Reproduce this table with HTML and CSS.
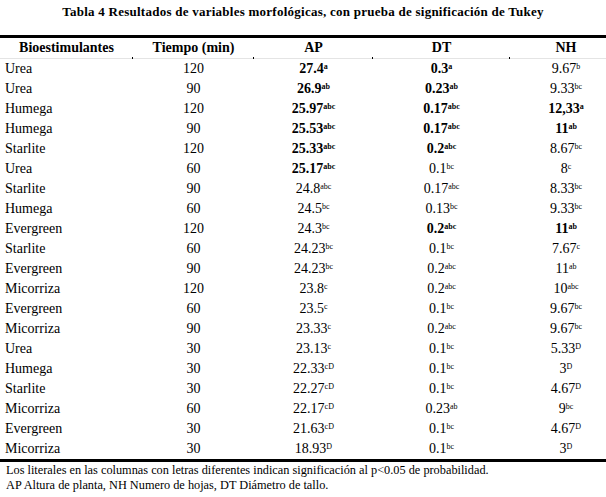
FILE: index.html
```html
<!DOCTYPE html>
<html lang="es">
<head>
<meta charset="utf-8">
<title>Tabla 4</title>
<link rel="stylesheet" href="styles.css">
</head>
<body>
<div class="page">
  <h1 class="title">Tabla 4 Resultados de variables morfológicas, con prueba de significación de Tukey</h1>
  <table class="data">
    <colgroup>
      <col class="c-name"><col class="c-time"><col class="c-ap"><col class="c-dt"><col class="c-nh">
    </colgroup>
    <thead>
      <tr><th>Bioestimulantes</th><th>Tiempo (min)</th><th>AP</th><th>DT</th><th class="last">NH</th></tr>
    </thead>
    <tbody>
      <tr><td>Urea</td><td>120</td><td><b>27.4<sup>a</sup></b></td><td><b>0.3<sup>a</sup></b></td><td>9.67<sup>b</sup></td></tr>
      <tr><td>Urea</td><td>90</td><td><b>26.9<sup>ab</sup></b></td><td><b>0.23<sup>ab</sup></b></td><td>9.33<sup>bc</sup></td></tr>
      <tr><td>Humega</td><td>120</td><td><b>25.97<sup>abc</sup></b></td><td><b>0.17<sup>abc</sup></b></td><td><b>12,33<sup>a</sup></b></td></tr>
      <tr><td>Humega</td><td>90</td><td><b>25.53<sup>abc</sup></b></td><td><b>0.17<sup>abc</sup></b></td><td><b>11<sup>ab</sup></b></td></tr>
      <tr><td>Starlite</td><td>120</td><td><b>25.33<sup>abc</sup></b></td><td><b>0.2<sup>abc</sup></b></td><td>8.67<sup>bc</sup></td></tr>
      <tr><td>Urea</td><td>60</td><td><b>25.17<sup>abc</sup></b></td><td>0.1<sup>bc</sup></td><td>8<sup>c</sup></td></tr>
      <tr><td>Starlite</td><td>90</td><td>24.8<sup>abc</sup></td><td>0.17<sup>abc</sup></td><td>8.33<sup>bc</sup></td></tr>
      <tr><td>Humega</td><td>60</td><td>24.5<sup>bc</sup></td><td>0.13<sup>bc</sup></td><td>9.33<sup>bc</sup></td></tr>
      <tr><td>Evergreen</td><td>120</td><td>24.3<sup>bc</sup></td><td><b>0.2<sup>abc</sup></b></td><td><b>11<sup>ab</sup></b></td></tr>
      <tr><td>Starlite</td><td>60</td><td>24.23<sup>bc</sup></td><td>0.1<sup>bc</sup></td><td>7.67<sup>c</sup></td></tr>
      <tr><td>Evergreen</td><td>90</td><td>24.23<sup>bc</sup></td><td>0.2<sup>abc</sup></td><td>11<sup>ab</sup></td></tr>
      <tr><td>Micorriza</td><td>120</td><td>23.8<sup>c</sup></td><td>0.2<sup>abc</sup></td><td>10<sup>abc</sup></td></tr>
      <tr><td>Evergreen</td><td>60</td><td>23.5<sup>c</sup></td><td>0.1<sup>bc</sup></td><td>9.67<sup>bc</sup></td></tr>
      <tr><td>Micorriza</td><td>90</td><td>23.33<sup>c</sup></td><td>0.2<sup>abc</sup></td><td>9.67<sup>bc</sup></td></tr>
      <tr><td>Urea</td><td>30</td><td>23.13<sup>c</sup></td><td>0.1<sup>bc</sup></td><td>5.33<sup>D</sup></td></tr>
      <tr><td>Humega</td><td>30</td><td>22.33<sup>cD</sup></td><td>0.1<sup>bc</sup></td><td>3<sup>D</sup></td></tr>
      <tr><td>Starlite</td><td>30</td><td>22.27<sup>cD</sup></td><td>0.1<sup>bc</sup></td><td>4.67<sup>D</sup></td></tr>
      <tr><td>Micorriza</td><td>60</td><td>22.17<sup>cD</sup></td><td>0.23<sup>ab</sup></td><td>9<sup>bc</sup></td></tr>
      <tr><td>Evergreen</td><td>30</td><td>21.63<sup>cD</sup></td><td>0.1<sup>bc</sup></td><td>4.67<sup>D</sup></td></tr>
      <tr><td>Micorriza</td><td>30</td><td>18.93<sup>D</sup></td><td>0.1<sup>bc</sup></td><td>3<sup>D</sup></td></tr>
    </tbody>
  </table>
  <div class="notes">
    <p>Los literales en las columnas con letras diferentes indican significación al p&lt;0.05 de probabilidad.</p>
    <p>AP Altura de planta, NH Numero de hojas, DT Diámetro de tallo.</p>
  </div>
</div>
</body>
</html>
```

FILE: styles.css
```css
html, body {
  margin: 0;
  padding: 0;
  background: #fff;
}

.page {
  width: 606px;
  height: 497px;
  overflow: hidden;
  font-family: "Liberation Serif", "Times New Roman", serif;
  color: #000;
}

.title {
  margin: 0;
  height: 35px;
  padding-top: 4px;
  box-sizing: border-box;
  font-size: 13px;
  line-height: 16px;
  font-weight: bold;
  text-align: center;
  letter-spacing: 0.25px;
}

.data {
  width: 622px;
  border-collapse: collapse;
  table-layout: fixed;
  border-top: 3px solid #000;
  border-bottom: 3px solid #000;
  font-size: 14px;
}

.c-name { width: 133px; }
.c-time { width: 121px; }
.c-ap { width: 119px; }
.c-dt { width: 137px; }
.c-nh { width: 112px; }

.data th {
  position: relative;
  height: 20px;
  padding: 0;
  font-weight: bold;
  text-align: center;
  line-height: 20px;
  border-bottom: 1px solid #e4e4e4;
}

.data th::after {
  content: "";
  position: absolute;
  right: 0;
  bottom: -1px;
  width: 1px;
  height: 2px;
  background: #000;
}

.data th.last::after {
  display: none;
}

.data td {
  height: 20px;
  padding: 0;
  line-height: 20px;
  text-align: center;
  white-space: nowrap;
}

.data td:first-child {
  text-align: left;
  padding-left: 5px;
}

.data sup {
  font-size: 8px;
  line-height: 0;
  vertical-align: 4px;
}

.notes {
  padding: 1px 0 0 6px;
  font-size: 12.3px;
  line-height: 15px;
}

.notes p {
  margin: 0;
}
```
